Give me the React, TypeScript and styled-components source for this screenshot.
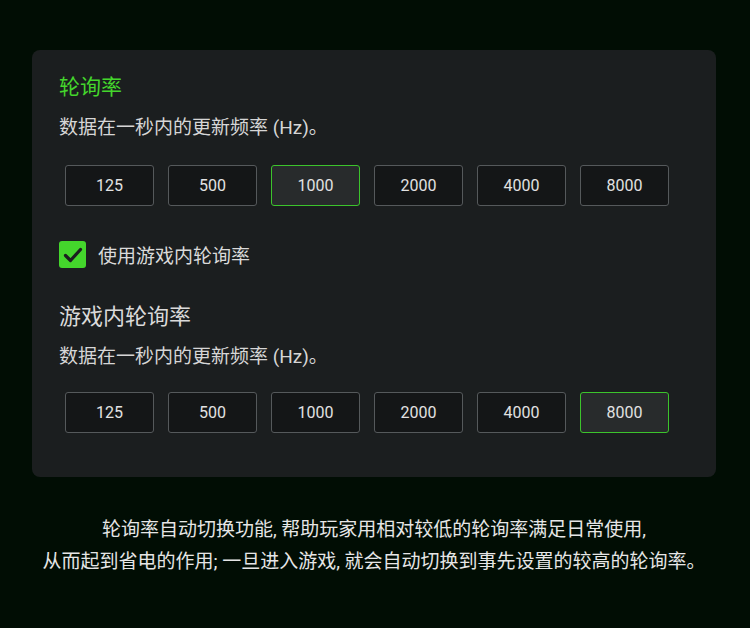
import React from "react";
import styled, { createGlobalStyle } from "styled-components";

const Global = createGlobalStyle`
  html, body { margin: 0; padding: 0; background: #010d04; }
  body { font-family: Roboto, "Noto Sans CJK SC", sans-serif; }
`;

const Page = styled.div`
  width: 750px;
  height: 628px;
  background: #010d04;
  display: flex;
  flex-direction: column;
  padding: 50px 0 0 32px;
  box-sizing: border-box;
`;

const Card = styled.div`
  width: 684px;
  background: #1b1e1f;
  border-radius: 8px;
  padding: 22px 27px 44px;
  box-sizing: border-box;
  display: flex;
  flex-direction: column;
`;

const Title = styled.div<{ $green?: boolean; $mt?: number }>`
  margin-top: ${(p) => p.$mt ?? 0}px;
  font-size: ${(p) => (p.$green ? 21 : 22)}px;
  line-height: 30px;
  color: ${(p) => (p.$green ? "#44d62c" : "#dadada")};
`;

const Sub = styled.div<{ $mt: number }>`
  margin-top: ${(p) => p.$mt}px;
  font-size: 19px;
  line-height: 26px;
  color: #d6d6d6;
`;

const Row = styled.div<{ $mt: number }>`
  margin-top: ${(p) => p.$mt}px;
  padding-left: 6px;
  display: flex;
  gap: 14px;
`;

const Btn = styled.div<{ $on?: boolean }>`
  width: 89px;
  height: 41px;
  box-sizing: border-box;
  border-radius: 3px;
  border: 1.5px solid ${(p) => (p.$on ? "#3cc42c" : "#55595b")};
  background: ${(p) => (p.$on ? "#282b2c" : "#141617")};
  color: #e2e2e2;
  font-size: 16px;
  display: flex;
  align-items: center;
  justify-content: center;
`;

const CheckRow = styled.div`
  margin-top: 35px;
  display: flex;
  align-items: center;
  gap: 12px;
`;

const Box = styled.div`
  width: 27px;
  height: 27px;
  border-radius: 3px;
  background: #44d62c;
  display: flex;
  align-items: center;
  justify-content: center;
`;

const CheckLabel = styled.span`
  font-size: 19px;
  color: #dadada;
`;

const Footer = styled.div`
  width: 684px;
  margin-top: 37px;
  text-align: center;
  font-size: 19px;
  line-height: 32px;
  color: #e6e6e6;
  white-space: nowrap;
`;

const rates = ["125", "500", "1000", "2000", "4000", "8000"];

export default function App() {
  return (
    <Page>
      <Global />
      <Card>
        <Title $green>轮询率</Title>
        <Sub $mt={13}>数据在一秒内的更新频率 (Hz)。</Sub>
        <Row $mt={24}>
          {rates.map((r) => (
            <Btn key={r} $on={r === "1000"}>{r}</Btn>
          ))}
        </Row>
        <CheckRow>
          <Box>
            <svg width="20" height="16" viewBox="0 0 20 16">
              <path d="M2.5 8.5 L7.5 13.5 L17.5 2.5" fill="none" stroke="#1b1e1f" strokeWidth="3.2" strokeLinecap="round" strokeLinejoin="round" />
            </svg>
          </Box>
          <CheckLabel>使用游戏内轮询率</CheckLabel>
        </CheckRow>
        <Title $mt={34}>游戏内轮询率</Title>
        <Sub $mt={12}>数据在一秒内的更新频率 (Hz)。</Sub>
        <Row $mt={22}>
          {rates.map((r) => (
            <Btn key={r} $on={r === "8000"}>{r}</Btn>
          ))}
        </Row>
      </Card>
      <Footer>
        轮询率自动切换功能, 帮助玩家用相对较低的轮询率满足日常使用,
        <br />
        从而起到省电的作用; 一旦进入游戏, 就会自动切换到事先设置的较高的轮询率。
      </Footer>
    </Page>
  );
}
